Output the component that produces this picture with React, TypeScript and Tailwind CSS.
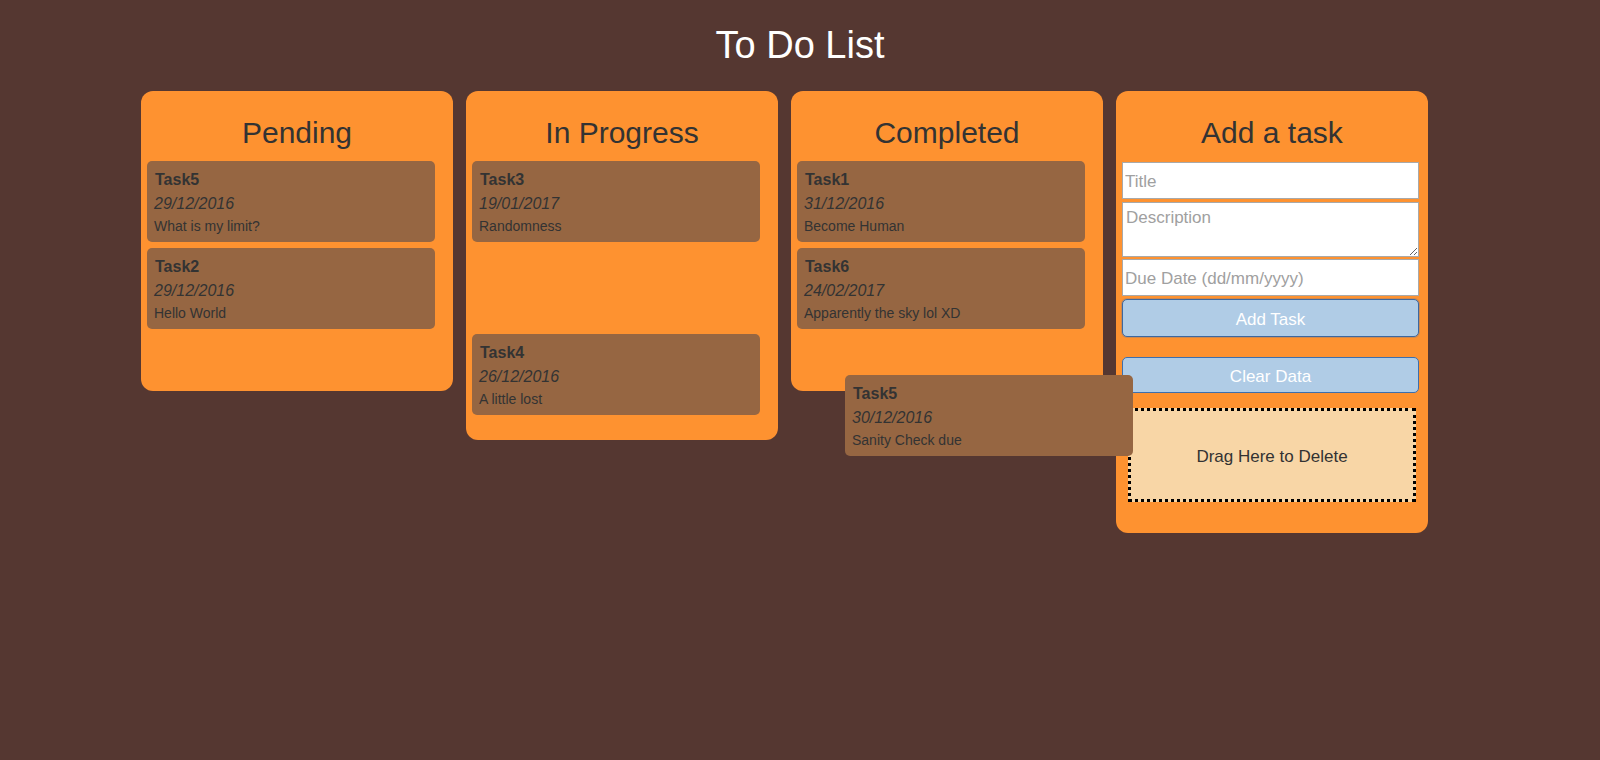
type Task = {
  title: string;
  date: string;
  desc: string;
};

const columns: { name: string; tasks: (Task | null)[]; minH?: boolean }[] = [
  {
    name: 'Pending',
    minH: true,
    tasks: [
      { title: 'Task5', date: '29/12/2016', desc: 'What is my limit?' },
      { title: 'Task2', date: '29/12/2016', desc: 'Hello World' },
    ],
  },
  {
    name: 'In Progress',
    tasks: [
      { title: 'Task3', date: '19/01/2017', desc: 'Randomness' },
      null,
      { title: 'Task4', date: '26/12/2016', desc: 'A little lost' },
    ],
  },
  {
    name: 'Completed',
    minH: true,
    tasks: [
      { title: 'Task1', date: '31/12/2016', desc: 'Become Human' },
      { title: 'Task6', date: '24/02/2017', desc: 'Apparently the sky lol XD' },
    ],
  },
];

function TaskCard({ task, className = '' }: { task: Task; className?: string }) {
  return (
    <div className={`w-[288px] rounded-[5px] bg-[#966642] px-[7px] pt-[10px] pb-[8px] text-[#333333] ${className}`}>
      <div className="pl-px text-[16px] font-bold leading-[18px]">{task.title}</div>
      <div className="mt-[6px] text-[16px] italic leading-[18px]">{task.date}</div>
      <div className="mt-[5px] text-[14px] leading-[16px]">{task.desc}</div>
    </div>
  );
}

export default function App() {
  return (
    <div
      className="relative min-h-screen bg-[#553731] pb-10"
      style={{ fontFamily: '"Liberation Sans", Arial, sans-serif' }}
    >
      <h1 className="pt-[24px] text-center text-[38px] leading-[42px] text-white">To Do List</h1>

      <div className="mt-[25px] flex items-start gap-[13px] pl-[141px]">
        {columns.map((col) => (
          <div
            key={col.name}
            className={`flex w-[312px] flex-col rounded-[12px] bg-[#fe9230] px-[6px] pt-[25px] pb-[25px] ${
              col.minH ? 'min-h-[300px]' : ''
            }`}
          >
            <h2 className="mb-[11px] text-center text-[30px] leading-[34px] text-[#333333]">{col.name}</h2>
            <div className="flex flex-col gap-[6px]">
              {col.tasks.map((task, i) =>
                task ? <TaskCard key={i} task={task} /> : <div key={i} className="h-[80px]" />
              )}
            </div>
          </div>
        ))}

        <div className="flex w-[312px] flex-col rounded-[12px] bg-[#fe9230] px-[6px] pt-[25px] pb-[31px]">
          <h2 className="mb-[12px] text-center text-[30px] leading-[34px] text-[#333333]">Add a task</h2>
          <input
            placeholder="Title"
            className="h-[37px] w-[297px] border border-[#a9a9a9] bg-white px-[2px] pt-[2px] text-[17px] text-[#333] outline-none placeholder:text-[#a0a0a0]"
          />
          <textarea
            placeholder="Description"
            className="mt-[3px] h-[55px] w-[297px] border border-[#a9a9a9] bg-white px-[3px] pt-[5px] text-[17px] leading-[20px] text-[#333] outline-none placeholder:text-[#a0a0a0]"
          />
          <input
            placeholder="Due Date (dd/mm/yyyy)"
            className="mt-[2px] h-[37px] w-[297px] border border-[#a9a9a9] bg-white px-[2px] pt-[2px] text-[17px] text-[#333] outline-none placeholder:text-[#a0a0a0]"
          />
          <button className="mt-[3px] h-[38px] w-[297px] rounded-[5px] border border-[#3d68a0] bg-[#b0cce6] pt-[4px] text-[17px] text-white shadow-[0_0_0_1px_rgba(120,120,140,0.35)]">
            Add Task
          </button>
          <button className="mt-[20px] h-[36px] w-[297px] rounded-[5px] border border-[#3d6fae] bg-[#b0cce6] pt-[4px] text-[17px] text-white">
            Clear Data
          </button>
          <div className="mt-[15px] flex h-[94px] w-[288px] items-center justify-center self-center border-[3px] border-dotted border-black bg-[#f8d6a6] pt-[4px] text-[17px] text-[#333333]">
            Drag Here to Delete
          </div>
        </div>
      </div>

      {/* card being dragged */}
      <TaskCard
        task={{ title: 'Task5', date: '30/12/2016', desc: 'Sanity Check due' }}
        className="absolute top-[375px] left-[845px] z-10 h-[81px] w-[287px]"
      />
    </div>
  );
}
